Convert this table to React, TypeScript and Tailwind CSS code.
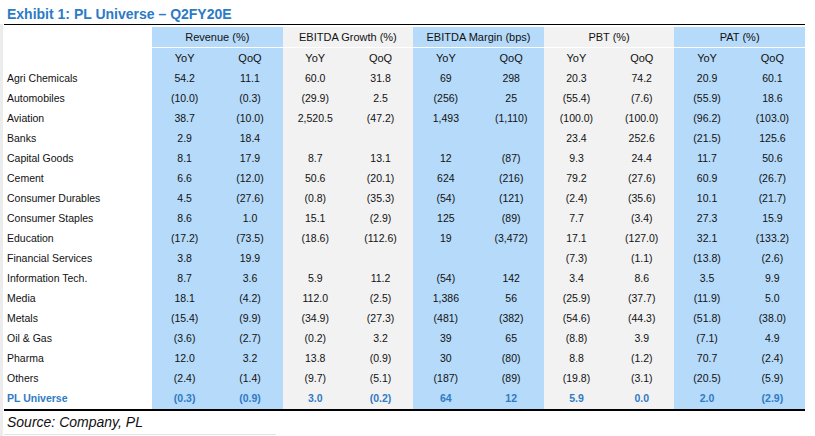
const groups = [
  "Revenue (%)",
  "EBITDA Growth (%)",
  "EBITDA Margin (bps)",
  "PBT (%)",
  "PAT (%)",
];

const groupBg = [
  "bg-[#b6daf9]",
  "bg-[#f2f2f2]",
  "bg-[#b6daf9]",
  "bg-[#f2f2f2]",
  "bg-[#b6daf9]",
];

const colBg = [
  "bg-[#b6daf9]",
  "bg-[#b6daf9]",
  "bg-[#f2f2f2]",
  "bg-[#f2f2f2]",
  "bg-[#b6daf9]",
  "bg-[#b6daf9]",
  "bg-[#f2f2f2]",
  "bg-[#f2f2f2]",
  "bg-[#b6daf9]",
  "bg-[#b6daf9]",
];

const rows: string[][] = [
  ["Agri Chemicals", "54.2", "11.1", "60.0", "31.8", "69", "298", "20.3", "74.2", "20.9", "60.1"],
  ["Automobiles", "(10.0)", "(0.3)", "(29.9)", "2.5", "(256)", "25", "(55.4)", "(7.6)", "(55.9)", "18.6"],
  ["Aviation", "38.7", "(10.0)", "2,520.5", "(47.2)", "1,493", "(1,110)", "(100.0)", "(100.0)", "(96.2)", "(103.0)"],
  ["Banks", "2.9", "18.4", "", "", "", "", "23.4", "252.6", "(21.5)", "125.6"],
  ["Capital Goods", "8.1", "17.9", "8.7", "13.1", "12", "(87)", "9.3", "24.4", "11.7", "50.6"],
  ["Cement", "6.6", "(12.0)", "50.6", "(20.1)", "624", "(216)", "79.2", "(27.6)", "60.9", "(26.7)"],
  ["Consumer Durables", "4.5", "(27.6)", "(0.8)", "(35.3)", "(54)", "(121)", "(2.4)", "(35.6)", "10.1", "(21.7)"],
  ["Consumer Staples", "8.6", "1.0", "15.1", "(2.9)", "125", "(89)", "7.7", "(3.4)", "27.3", "15.9"],
  ["Education", "(17.2)", "(73.5)", "(18.6)", "(112.6)", "19", "(3,472)", "17.1", "(127.0)", "32.1", "(133.2)"],
  ["Financial Services", "3.8", "19.9", "", "", "", "", "(7.3)", "(1.1)", "(13.8)", "(2.6)"],
  ["Information Tech.", "8.7", "3.6", "5.9", "11.2", "(54)", "142", "3.4", "8.6", "3.5", "9.9"],
  ["Media", "18.1", "(4.2)", "112.0", "(2.5)", "1,386", "56", "(25.9)", "(37.7)", "(11.9)", "5.0"],
  ["Metals", "(15.4)", "(9.9)", "(34.9)", "(27.3)", "(481)", "(382)", "(54.6)", "(44.3)", "(51.8)", "(38.0)"],
  ["Oil & Gas", "(3.6)", "(2.7)", "(0.2)", "3.2", "39", "65", "(8.8)", "3.9", "(7.1)", "4.9"],
  ["Pharma", "12.0", "3.2", "13.8", "(0.9)", "30", "(80)", "8.8", "(1.2)", "70.7", "(2.4)"],
  ["Others", "(2.4)", "(1.4)", "(9.7)", "(5.1)", "(187)", "(89)", "(19.8)", "(3.1)", "(20.5)", "(5.9)"],
];

const total = ["PL Universe", "(0.3)", "(0.9)", "3.0", "(0.2)", "64", "12", "5.9", "0.0", "2.0", "(2.9)"];

const grid = "grid grid-cols-[148px_repeat(10,minmax(0,1fr))]";

const Row = ({ cells, isTotal }: { cells: string[]; isTotal?: boolean }) => (
  <div className={`${grid} h-[20px]`}>
    <div
      className={`flex items-center pl-[3px] ${
        isTotal ? "text-[#2f7bc4] font-bold" : "text-[#111]"
      }`}
    >
      {cells[0]}
    </div>
    {cells.slice(1).map((v, i) => (
      <div
        key={i}
        className={`flex items-center justify-center ${colBg[i]} ${
          isTotal ? "text-[#2f7bc4] font-bold" : "text-[#111]"
        }`}
      >
        {v}
      </div>
    ))}
  </div>
);

export default function App() {
  return (
    <div className="w-[815px] h-[436px] bg-white font-['Liberation_Sans',Arial,sans-serif] overflow-hidden">
      <div className="h-[24px] flex items-end pl-[7px] pb-[3px]">
        <h1 className="text-[14px] font-bold text-[#2b7bc6] leading-none">
          Exhibit 1: PL Universe – Q2FY20E
        </h1>
      </div>
      <div className="border-l-[3px] border-[#ececec] h-[412px] pl-[1px] pr-[10px] flex flex-col">
        <div className="h-[1px] bg-black" />
        <div className="pt-[2px] text-[11px] text-[#111]">
          <div className={`${grid} h-[21px] border-b border-white`}>
            <div />
            {groups.map((g, i) => (
              <div
                key={g}
                className={`col-span-2 flex items-center justify-center ${groupBg[i]}`}
              >
                {g}
              </div>
            ))}
          </div>
          <div className={`${grid} h-[21px]`}>
            <div />
            {colBg.map((bg, i) => (
              <div key={i} className={`flex items-center justify-center ${bg}`}>
                {i % 2 === 0 ? "YoY" : "QoQ"}
              </div>
            ))}
          </div>
        </div>
        <div className="text-[10.5px]">
          {rows.map((r) => (
            <Row key={r[0]} cells={r} />
          ))}
          <Row cells={total} isTotal />
        </div>
        <div className="h-[2px] bg-black" />
        <div className="h-[22px] flex items-center pl-[3px] text-[14px] italic text-[#111]">
          Source: Company, PL
        </div>
        <div className="mt-[1px] h-[1px] w-[272px] bg-[#e4e4e4]" />
      </div>
    </div>
  );
}
